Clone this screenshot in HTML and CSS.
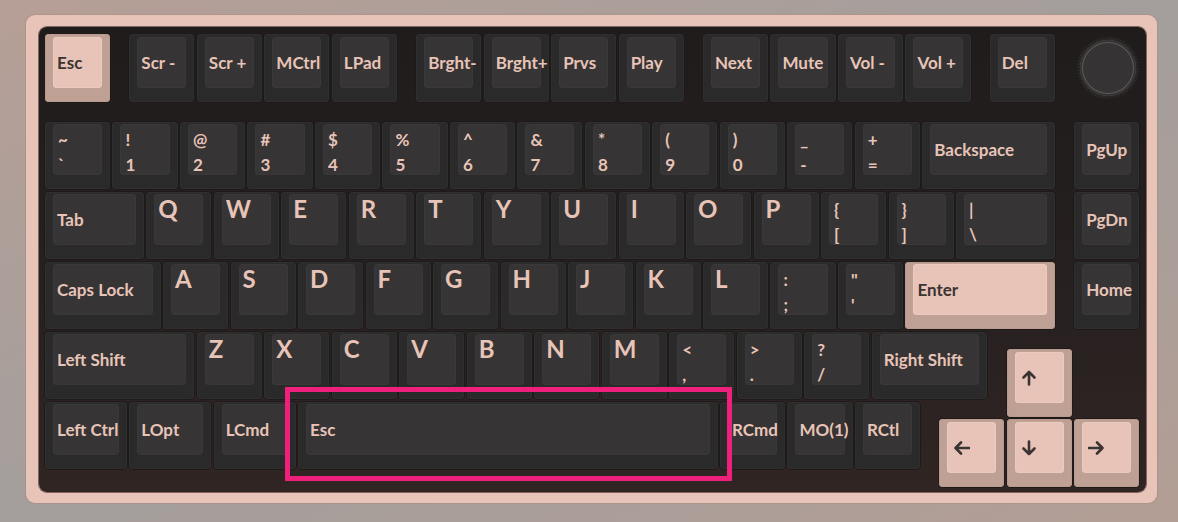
FILE: index.html
```html
<!DOCTYPE html>
<html>
<head>
<meta charset="utf-8">
<title>Keyboard</title>
<link rel="stylesheet" href="styles.css">
</head>
<body>
<div class="frame">
  <div class="plate">
    <div class="keys">
      <div class="row row0">
        <div class="key u1 accent"><div class="cap">Esc</div></div>
        <div class="sp"></div>
        <div class="key u1"><div class="cap">Scr -</div></div>
        <div class="key u1"><div class="cap">Scr +</div></div>
        <div class="key u1"><div class="cap">MCtrl</div></div>
        <div class="key u1"><div class="cap">LPad</div></div>
        <div class="sp"></div>
        <div class="key u1"><div class="cap">Brght-</div></div>
        <div class="key u1"><div class="cap">Brght+</div></div>
        <div class="key u1"><div class="cap">Prvs</div></div>
        <div class="key u1"><div class="cap">Play</div></div>
        <div class="sp"></div>
        <div class="key u1"><div class="cap">Next</div></div>
        <div class="key u1"><div class="cap">Mute</div></div>
        <div class="key u1"><div class="cap">Vol -</div></div>
        <div class="key u1"><div class="cap">Vol +</div></div>
        <div class="sp"></div>
        <div class="key u1"><div class="cap">Del</div></div>
        <div class="sp"></div>
        <div class="knob"><div class="knob-ring"><div class="knob-face"></div></div></div>
      </div>

      <div class="row">
        <div class="key u1"><div class="cap dbl"><span>~</span><span>`</span></div></div>
        <div class="key u1"><div class="cap dbl"><span>!</span><span>1</span></div></div>
        <div class="key u1"><div class="cap dbl"><span>@</span><span>2</span></div></div>
        <div class="key u1"><div class="cap dbl"><span>#</span><span>3</span></div></div>
        <div class="key u1"><div class="cap dbl"><span>$</span><span>4</span></div></div>
        <div class="key u1"><div class="cap dbl"><span>%</span><span>5</span></div></div>
        <div class="key u1"><div class="cap dbl"><span>^</span><span>6</span></div></div>
        <div class="key u1"><div class="cap dbl"><span>&amp;</span><span>7</span></div></div>
        <div class="key u1"><div class="cap dbl"><span>*</span><span>8</span></div></div>
        <div class="key u1"><div class="cap dbl"><span>(</span><span>9</span></div></div>
        <div class="key u1"><div class="cap dbl"><span>)</span><span>0</span></div></div>
        <div class="key u1"><div class="cap dbl"><span>_</span><span>-</span></div></div>
        <div class="key u1"><div class="cap dbl"><span>+</span><span>=</span></div></div>
        <div class="key u2"><div class="cap">Backspace</div></div>
        <div class="sp"></div>
        <div class="key u1"><div class="cap">PgUp</div></div>
      </div>

      <div class="row">
        <div class="key u15"><div class="cap">Tab</div></div>
        <div class="key u1"><div class="cap alpha">Q</div></div>
        <div class="key u1"><div class="cap alpha">W</div></div>
        <div class="key u1"><div class="cap alpha">E</div></div>
        <div class="key u1"><div class="cap alpha">R</div></div>
        <div class="key u1"><div class="cap alpha">T</div></div>
        <div class="key u1"><div class="cap alpha">Y</div></div>
        <div class="key u1"><div class="cap alpha">U</div></div>
        <div class="key u1"><div class="cap alpha">I</div></div>
        <div class="key u1"><div class="cap alpha">O</div></div>
        <div class="key u1"><div class="cap alpha">P</div></div>
        <div class="key u1"><div class="cap dbl"><span>{</span><span>[</span></div></div>
        <div class="key u1"><div class="cap dbl"><span>}</span><span>]</span></div></div>
        <div class="key u15"><div class="cap dbl"><span>|</span><span>\</span></div></div>
        <div class="sp"></div>
        <div class="key u1"><div class="cap">PgDn</div></div>
      </div>

      <div class="row">
        <div class="key u175"><div class="cap">Caps Lock</div></div>
        <div class="key u1"><div class="cap alpha">A</div></div>
        <div class="key u1"><div class="cap alpha">S</div></div>
        <div class="key u1"><div class="cap alpha">D</div></div>
        <div class="key u1"><div class="cap alpha">F</div></div>
        <div class="key u1"><div class="cap alpha">G</div></div>
        <div class="key u1"><div class="cap alpha">H</div></div>
        <div class="key u1"><div class="cap alpha">J</div></div>
        <div class="key u1"><div class="cap alpha">K</div></div>
        <div class="key u1"><div class="cap alpha">L</div></div>
        <div class="key u1"><div class="cap dbl"><span>:</span><span>;</span></div></div>
        <div class="key u1"><div class="cap dbl"><span>"</span><span>'</span></div></div>
        <div class="key u225 accent"><div class="cap">Enter</div></div>
        <div class="sp"></div>
        <div class="key u1"><div class="cap">Home</div></div>
      </div>

      <div class="row">
        <div class="key u225"><div class="cap">Left Shift</div></div>
        <div class="key u1"><div class="cap alpha">Z</div></div>
        <div class="key u1"><div class="cap alpha">X</div></div>
        <div class="key u1"><div class="cap alpha">C</div></div>
        <div class="key u1"><div class="cap alpha">V</div></div>
        <div class="key u1"><div class="cap alpha">B</div></div>
        <div class="key u1"><div class="cap alpha">N</div></div>
        <div class="key u1"><div class="cap alpha">M</div></div>
        <div class="key u1"><div class="cap dbl"><span>&lt;</span><span>,</span></div></div>
        <div class="key u1"><div class="cap dbl"><span>&gt;</span><span>.</span></div></div>
        <div class="key u1"><div class="cap dbl"><span>?</span><span>/</span></div></div>
        <div class="key u175"><div class="cap">Right Shift</div></div>
        <div class="sp"></div>
        <div class="key u1 accent drop"><div class="cap arrow">
          <svg width="16" height="16" viewBox="0 0 16 16"><path d="M8 14.5V2M2.5 7.5L8 2l5.5 5.5"/></svg>
        </div></div>
      </div>

      <div class="row">
        <div class="key u125"><div class="cap">Left Ctrl</div></div>
        <div class="key u125"><div class="cap">LOpt</div></div>
        <div class="key u125"><div class="cap">LCmd</div></div>
        <div class="key u625 space"><div class="cap">Esc</div><div class="hl"></div></div>
        <div class="key u1"><div class="cap">RCmd</div></div>
        <div class="key u1"><div class="cap">MO(1)</div></div>
        <div class="key u1"><div class="cap">RCtl</div></div>
        <div class="sp"></div>
        <div class="key u1 accent drop"><div class="cap arrow">
          <svg width="17" height="16" viewBox="0 0 17 16"><path d="M16 8H2.5M8 2.5L2.5 8 8 13.5"/></svg>
        </div></div>
        <div class="key u1 accent drop"><div class="cap arrow">
          <svg width="16" height="16" viewBox="0 0 16 16"><path d="M8 1.5V14M2.5 8.5L8 14l5.5-5.5"/></svg>
        </div></div>
        <div class="key u1 accent drop"><div class="cap arrow">
          <svg width="17" height="16" viewBox="0 0 17 16"><path d="M1 8h13.5M9 2.5L14.5 8 9 13.5"/></svg>
        </div></div>
      </div>
    </div>
  </div>
</div>
</body>
</html>
```

FILE: styles.css
```css
:root {
  --ux: 67.5px;
  --g: 2.4px;
  --pink: #e8c4b8;
  --pink-dark: #bea094;
  --ink: #3b3432;
}

* { box-sizing: border-box; }

html, body {
  margin: 0;
  width: 1178px;
  height: 522px;
  overflow: hidden;
}

body {
  padding: 15px 0 0 26px;
  background: linear-gradient(to bottom right, #b69f96 0%, #a39e9c 50%, #b39e95 100%);
  font-family: Lato, "Liberation Sans", sans-serif;
}

.frame {
  width: 1131px;
  height: 488px;
  padding: 12px 11px 11px 13px;
  background: var(--pink);
  border-radius: 9px;
  box-shadow: 0 0 0 1px rgba(170, 135, 122, 0.45);
}

.plate {
  height: 100%;
  padding: 7px 0 0 6px;
  border-radius: 8px;
  background: linear-gradient(to bottom, #201c1b 0%, #262020 55%, #302523 100%);
  box-shadow: 0 0 0 1px rgba(60, 40, 36, 0.6);
}

.row {
  display: flex;
  align-items: flex-start;
  height: 70px;
}

.row0 { margin-bottom: 17.5px; }

.sp {
  flex: none;
  width: calc(var(--ux) * 0.25);
}

.key {
  flex: none;
  height: 67.6px;
  margin-right: var(--g);
  padding: 2.7px 8px 14px 8px;
  border-radius: 4px;
  background: #2b2a2a;
  box-shadow: inset 0 0 0 1px #302e2e, 0 0 0 1px #1e1a19;
}

.u1 { width: calc(var(--ux) - var(--g)); }
.u125 { width: calc(var(--ux) * 1.25 - var(--g)); }
.u15 { width: calc(var(--ux) * 1.5 - var(--g)); }
.u175 { width: calc(var(--ux) * 1.75 - var(--g)); }
.u2 { width: calc(var(--ux) * 2 - var(--g)); }
.u225 { width: calc(var(--ux) * 2.25 - var(--g)); }
.u625 { width: calc(var(--ux) * 6.25 - var(--g)); }

.drop { margin-top: 17.5px; }

.cap {
  height: 100%;
  display: flex;
  flex-direction: column;
  justify-content: center;
  padding: 1px 4px 0 4px;
  border-radius: 4px;
  background: #363434;
  box-shadow: inset 0 0 0 1px #3a3838;
  color: var(--pink);
  font-weight: 700;
  font-size: 17px;
  line-height: 20px;
  white-space: nowrap;
}

.cap.dbl {
  justify-content: space-between;
  padding: 6px 4px 0 5px;
}

.cap.alpha {
  justify-content: flex-start;
  padding: 1px 4px 0 4px;
  font-size: 24px;
  line-height: 28px;
}

.cap.arrow {
  padding: 2px 0 0 6px;
}

.cap.arrow svg {
  display: block;
  fill: none;
  stroke: var(--ink);
  stroke-width: 2.6;
  stroke-linecap: round;
  stroke-linejoin: round;
}

.accent {
  background: var(--pink-dark);
  box-shadow: inset 0 0 0 1px #b89a8f, 0 0 0 1px #1e1a19;
}

.accent .cap {
  background: var(--pink);
  box-shadow: inset 0 0 0 1px #ebcabf;
  color: var(--ink);
}

.space { position: relative; }

.hl {
  position: absolute;
  left: -13.3px;
  top: -15px;
  width: 447.7px;
  height: 94px;
  border: 5px solid #ef1f7c;
}

.knob {
  flex: none;
  width: var(--ux);
  height: 67.6px;
  display: flex;
  align-items: center;
  justify-content: center;
}

.knob-ring {
  width: 62px;
  height: 62px;
  border-radius: 50%;
  display: flex;
  align-items: center;
  justify-content: center;
  background: repeating-conic-gradient(#2b2929 0deg 3deg, #221f1f 3deg 6deg);
}

.knob-face {
  width: 56px;
  height: 56px;
  border-radius: 50%;
  background: #353333;
  box-shadow: 0 0 0 1px #2a2828, inset 0 0 0 2px #343232, inset 0 0 0 3px #5e5a58;
}
```
